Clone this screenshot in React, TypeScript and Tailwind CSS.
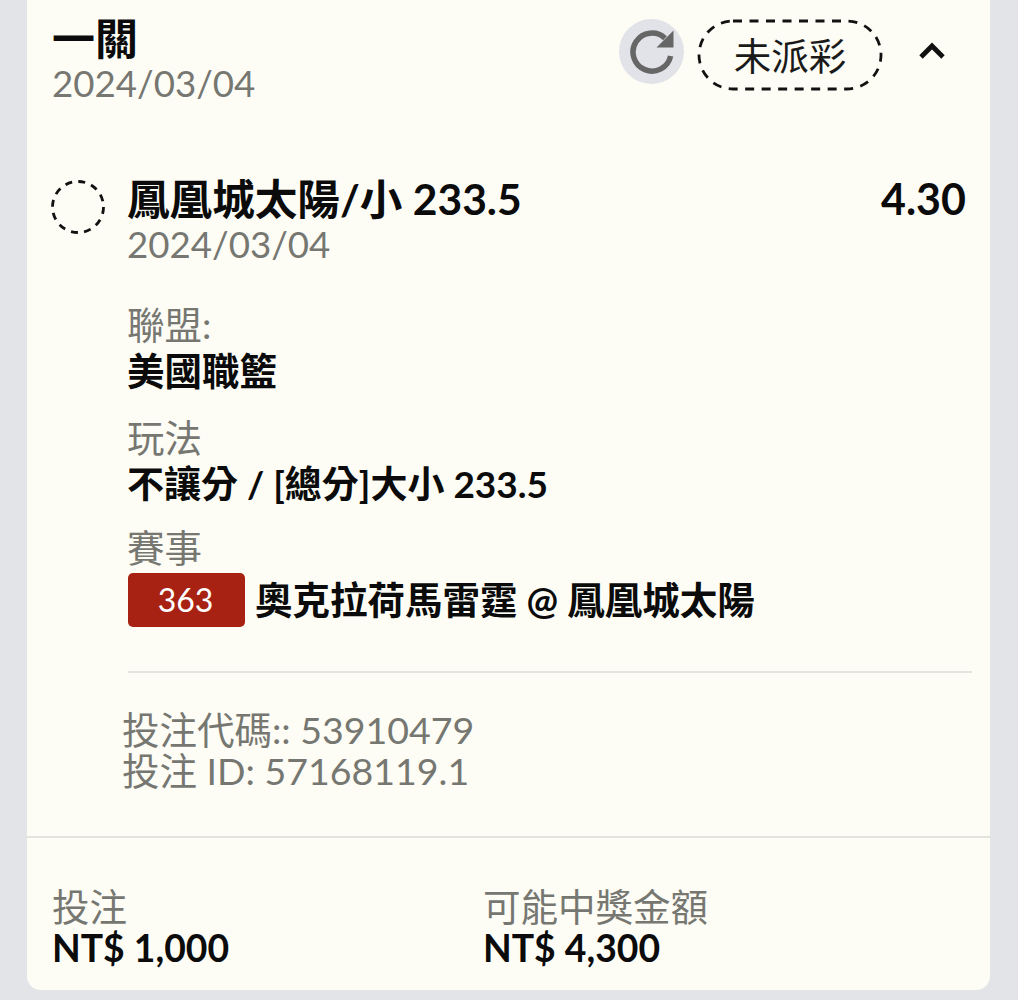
import React from "react";

const FONT = "font-['Lato','Noto_Sans_CJK_TC',sans-serif]";

const DashedCircle = () => (
  <svg width="54" height="54" viewBox="0 0 54 54" className="shrink-0">
    <circle cx="27" cy="27" r="25.5" fill="none" stroke="#111" strokeWidth="2.8" strokeDasharray="7 6.3" />
  </svg>
);

const StatusPill = () => (
  <div className="relative w-[186px] h-[72px] flex items-center justify-center">
    <svg width="186" height="72" viewBox="0 0 186 72" className="absolute inset-0">
      <rect x="2" y="2" width="182" height="68" rx="34" fill="none" stroke="#111" strokeWidth="2.8" strokeDasharray="9 7.5" />
    </svg>
    <span className="relative pt-[1px] text-[37.5px] leading-none text-[#1a1a1a]">未派彩</span>
  </div>
);

const RefreshIcon = () => (
  <div className="w-[65px] h-[65px] rounded-full bg-[#e2e3e8] flex items-center justify-center">
    <svg width="46" height="46" viewBox="0 0 46 46">
      <path d="M41.6 27A19 19 0 1 1 36 9.2" fill="none" stroke="#666" strokeWidth="5.5" />
      <path d="M44.5 1.5v17h-17z" fill="#666" />
    </svg>
  </div>
);

export default function App() {
  return (
    <div className={`w-[1018px] h-[1000px] overflow-hidden bg-[#e3e4e8] px-[27px] ${FONT}`}>
      <div className="w-[963px] h-[990px] bg-[#fdfdf6] rounded-b-[14px] flex flex-col">
        {/* Header */}
        <div className="flex justify-between items-start pl-[25px] pr-[44px] pt-[19px]">
          <div>
            <div className="text-[43px] leading-[39px] font-bold text-[#0b0b0b]">一關</div>
            <div className="text-[36.7px] leading-[40px] text-[#777772] mt-[5px]">2024/03/04</div>
          </div>
          <div className="flex items-start">
            <RefreshIcon />
            <div className="ml-[13px]"><StatusPill /></div>
            <svg width="28" height="20" viewBox="0 0 28 20" className="ml-[35px] mt-[22px]">
              <path d="M3 16 14 5l11 11" fill="none" stroke="#111" strokeWidth="4.8" />
            </svg>
          </div>
        </div>

        {/* Selection */}
        <div className="flex mt-[74px] pl-[24px] pr-[24px]">
          <div className="mt-[3px]"><DashedCircle /></div>
          <div className="ml-[23px] flex-1">
            <div className="flex justify-between items-start">
              <div className="ml-[-1px] text-[42.6px] leading-[43px] font-bold text-[#0b0b0b]">鳳凰城太陽/小 233.5</div>
              <div className="text-[43px] leading-[43px] font-bold text-[#0b0b0b]">4.30</div>
            </div>
            <div className="ml-[-1px] mt-[4px] text-[36.7px] leading-[40px] text-[#777772]">2024/03/04</div>

            <div className="ml-[-1px] mt-[38px] text-[37.5px] leading-[46px] text-[#777772]">聯盟:</div>
            <div className="ml-[-1px] text-[37.5px] leading-[46px] font-bold text-[#0b0b0b]">美國職籃</div>
            <div className="ml-[-1px] mt-[21px] text-[37.5px] leading-[46px] text-[#777772]">玩法</div>
            <div className="ml-[-1px] text-[37px] leading-[46px] font-bold text-[#0b0b0b]">不讓分 / [總分]大小 233.5</div>
            <div className="ml-[-1px] mt-[18px] text-[37.5px] leading-[46px] text-[#777772]">賽事</div>
            <div className="flex items-center mt-[2px]">
              <div className="w-[117px] h-[54px] bg-[#a82213] rounded-[5px] flex items-center justify-center pr-[2px] text-white text-[32px]">363</div>
              <div className="ml-[10px] text-[37.5px] leading-[54px] font-bold text-[#0b0b0b]">奧克拉荷馬雷霆 @ 鳳凰城太陽</div>
            </div>
            <div className="mt-[44px] h-[2px] bg-[#e4e4de] mr-[-6px]" />
            <div className="mt-[36px] ml-[-6px] text-[37.5px] leading-[41px] text-[#777772]">
              <div>投注代碼:: 53910479</div>
              <div>投注 ID: 57168119.1</div>
            </div>
          </div>
        </div>

        {/* Footer */}
        <div className="mt-[45px] border-t-2 border-[#e4e4de] pt-[48px] pl-[25px] flex">
          <div className="w-[431px]">
            <div className="text-[37.5px] leading-[41px] text-[#777772]">投注</div>
            <div className="text-[37.3px] leading-[41px] font-bold text-[#0b0b0b]">NT$ 1,000</div>
          </div>
          <div>
            <div className="text-[37.5px] leading-[41px] text-[#777772]">可能中獎金額</div>
            <div className="text-[37.3px] leading-[41px] font-bold text-[#0b0b0b]">NT$ 4,300</div>
          </div>
        </div>
      </div>
    </div>
  );
}
